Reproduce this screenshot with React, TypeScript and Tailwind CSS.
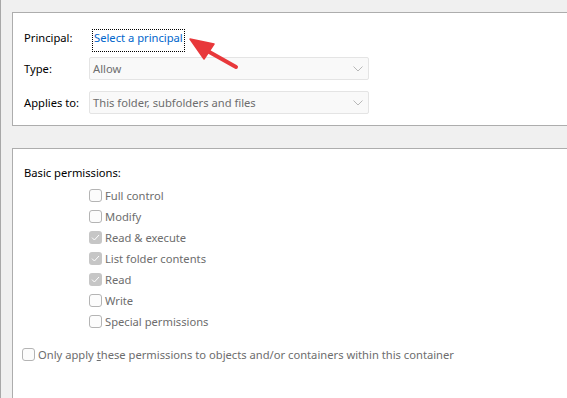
import React from 'react';

const font = { fontFamily: '"Segoe UI", "Noto Sans", Arial, sans-serif' };

function Chevron() {
  return (
    <svg width="10" height="6" viewBox="0 0 10 6" className="text-[#b0b0b0]">
      <path d="M0.5 0.5 L5 5 L9.5 0.5" fill="none" stroke="currentColor" strokeWidth="0.9" />
    </svg>
  );
}

function Select({ value }: { value: string }) {
  return (
    <div className="flex h-[23px] w-[280px] items-center justify-between rounded-[2px] border border-[#e4e4e4] bg-[#f9f9f9] pl-[3px] pr-[5px] text-[#6d6d6d]">
      <span>{value}</span>
      <Chevron />
    </div>
  );
}

function Box({ checked }: { checked?: boolean }) {
  if (checked) {
    return (
      <span className="flex h-[13px] w-[13px] shrink-0 items-center justify-center rounded-[3px] bg-[#c6c6c6]">
        <svg width="9" height="7" viewBox="0 0 9 7">
          <path d="M1 3.6 L3.4 6 L8 1" fill="none" stroke="#ffffff" strokeWidth="1" />
        </svg>
      </span>
    );
  }
  return (
    <span className="h-[13px] w-[13px] shrink-0 rounded-[3px] border border-[#b4b4b4] bg-[#fcfcfc]" />
  );
}

const permissions = [
  { label: 'Full control', checked: false },
  { label: 'Modify', checked: false },
  { label: 'Read & execute', checked: true },
  { label: 'List folder contents', checked: true },
  { label: 'Read', checked: true },
  { label: 'Write', checked: false },
  { label: 'Special permissions', checked: false },
];

export default function App() {
  return (
    <div
      className="relative h-[398px] w-full overflow-hidden border-l border-[#a8a8a8] bg-[#f0f0f0] pl-[11px] pt-[12px] text-[11.2px] leading-[16px]"
      style={font}
    >
      {/* Principal / type / applies to */}
      <div className="h-[114px] border-y border-l border-[#adadad] bg-white pl-[11px] pt-[16px]">
        <div className="flex h-[23px] items-center">
          <span className="mb-[5px] w-[65px] text-black">Principal:</span>
          <span className="ml-[3px] flex h-[23px] items-center border border-dotted border-black px-px pb-[5px] text-[#0066cc]">
            Select a principal
          </span>
        </div>
        <div className="mt-[5px] flex items-center">
          <span className="w-[65px] text-black">Type:</span>
          <Select value="Allow" />
        </div>
        <div className="mt-[11px] flex items-center">
          <span className="w-[65px] text-black">Applies to:</span>
          <Select value="This folder, subfolders and files" />
        </div>
      </div>

      {/* Permissions */}
      <div className="mt-[22px] h-[300px] border-l border-t border-[#adadad] bg-white pl-[11px] pt-[16px]">
        <div className="h-[16px] text-black">Basic permissions:</div>
        <div className="ml-[65px] mt-[4px] flex flex-col">
          {permissions.map((p) => (
            <div key={p.label} className="flex h-[21px] items-center gap-[3px] text-[#6d6d6d]">
              <Box checked={p.checked} />
              <span>{p.label}</span>
            </div>
          ))}
        </div>
        <div className="-ml-[2px] mt-[12px] flex h-[21px] items-center gap-[3px] text-[#6d6d6d]">
          <Box />
          <span>
            Only apply <span className="underline">t</span>hese permissions to objects and/or containers within this container
          </span>
        </div>
      </div>

      {/* annotation arrow */}
      <svg className="pointer-events-none absolute left-0 top-0" width="567" height="398">
        <line x1="235" y1="67" x2="203" y2="49" stroke="#e8383b" strokeWidth="4" strokeLinecap="round" />
        <polygon points="189,39 213,44 203,59" fill="#e8383b" stroke="#e8383b" strokeWidth="1.5" strokeLinejoin="round" />
      </svg>
    </div>
  );
}
